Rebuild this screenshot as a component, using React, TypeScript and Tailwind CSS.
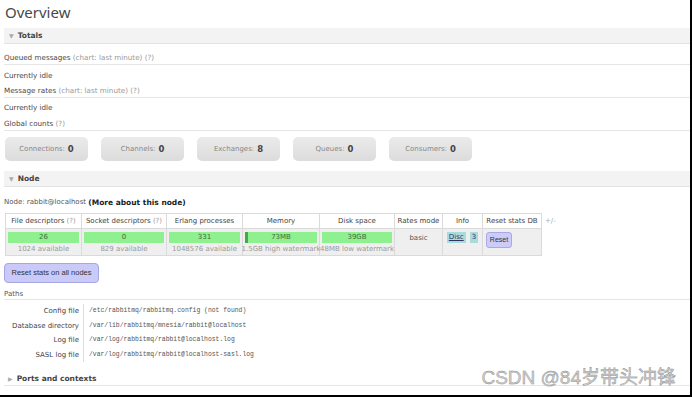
import React from 'react';

const sans = { fontFamily: '"DejaVu Sans", Verdana, sans-serif' };

const Hint = () => <span className="text-[#999]">(?)</span>;

const SectionBar: React.FC<{ open?: boolean; children: React.ReactNode }> = ({ open = true, children }) => (
  <div className="flex items-center h-[16px] bg-[#f3f3f3] border-b border-[#e2e2e2] pl-[5px] gap-[4px]">
    <span className="text-[6px] text-[#aaa]">{open ? '▼' : '▶'}</span>
    <span className="text-[7.5px] font-bold text-[#444]">{children}</span>
  </div>
);

const Line: React.FC<{ children: React.ReactNode; border?: boolean; h: string }> = ({ children, border, h }) => (
  <div
    className={`flex text-[7.2px] leading-[8px] text-[#484848] ${h} ${
      border ? 'items-end pb-[2px] border-b border-[#e6e6e6]' : 'items-center'
    }`}
  >
    {children}
  </div>
);

const CountBox: React.FC<{ label: string; value: string }> = ({ label, value }) => (
  <div className="w-[83px] h-[24px] rounded-[5px] bg-gradient-to-b from-[#ebebeb] to-[#dcdcdc] flex items-center justify-center gap-[3px]">
    <span className="text-[7px] text-[#888]">{label}:</span>
    <span className="text-[8.5px] font-bold text-[#444]">{value}</span>
  </div>
);

const cols = [
  { w: 'w-[75px]', h: 'File descriptors', hint: true },
  { w: 'w-[85px]', h: 'Socket descriptors', hint: true },
  { w: 'w-[76px]', h: 'Erlang processes' },
  { w: 'w-[77px]', h: 'Memory' },
  { w: 'w-[75px]', h: 'Disk space' },
  { w: 'w-[48px]', h: 'Rates mode' },
  { w: 'w-[40px]', h: 'Info' },
  { w: 'w-[59px]', h: 'Reset stats DB' },
];

const Bar: React.FC<{ value: string; sub: string; used?: boolean }> = ({ value, sub, used }) => (
  <div className="flex flex-col items-center px-[2px] pt-[3px]">
    <div className="relative w-full h-[11px] bg-[#8ef08e] flex items-center justify-center">
      {used && <div className="absolute left-0 top-0 h-full w-[3px] bg-[#44aa44]" />}
      <span className="relative text-[7px] text-[#3d6e3d]">{value}</span>
    </div>
    <span className="text-[7px] text-[#999] whitespace-nowrap leading-[12px]">{sub}</span>
  </div>
);

const paths = [
  ['Config file', '/etc/rabbitmq/rabbitmq.config (not found)'],
  ['Database directory', '/var/lib/rabbitmq/mnesia/rabbit@localhost'],
  ['Log file', '/var/log/rabbitmq/rabbit@localhost.log'],
  ['SASL log file', '/var/log/rabbitmq/rabbit@localhost-sasl.log'],
];

export default function App() {
  return (
    <div
      className="relative w-[692px] h-[397px] overflow-hidden bg-white border-r-2 border-b-2 border-black box-border pl-[4px]"
      style={sans}
    >
      <h1 className="h-[28px] pt-[1px] pl-[1px] text-[15px] leading-[22px] text-[#484848]" style={{ fontFamily: '"Noto Sans", sans-serif' }}>
        Overview
      </h1>

      <SectionBar>Totals</SectionBar>

      <div>
        <Line h="h-[21px]" border>
          Queued messages&nbsp;<span className="text-[#999]">(chart: last minute) (?)</span>
        </Line>
        <Line h="h-[21px]">Currently idle</Line>
        <Line h="h-[12px]" border>
          Message rates&nbsp;<span className="text-[#999]">(chart: last minute) (?)</span>
        </Line>
        <Line h="h-[20px]">Currently idle</Line>
        <Line h="h-[13px]" border>
          Global counts&nbsp;<Hint />
        </Line>
      </div>

      <div className="flex gap-[13px] pl-[1px] pt-[6px] pb-[10px]">
        <CountBox label="Connections" value="0" />
        <CountBox label="Channels" value="0" />
        <CountBox label="Exchanges" value="8" />
        <CountBox label="Queues" value="0" />
        <CountBox label="Consumers" value="0" />
      </div>

      <SectionBar>Node</SectionBar>

      <div className="h-[26px] flex items-center text-[7px] text-[#555] pt-[5px]">
        Node: rabbit@localhost&nbsp;<b className="text-[#222] text-[7.5px]">(More about this node)</b>
      </div>

      <div className="flex items-start pl-[1px]">
        <div className="border border-[#dadada] flex flex-col">
          <div className="flex h-[15px] bg-white border-b border-[#dadada]">
            {cols.map((c, i) => (
              <div key={i} className={`${c.w} ${i ? 'border-l border-[#dadada]' : ''} flex items-center justify-center text-[7px] text-[#444] whitespace-nowrap`}>
                {c.h}
                {c.hint && <>&nbsp;<Hint /></>}
              </div>
            ))}
          </div>
          <div className="flex h-[26px] bg-[#efefef]">
            <div className={cols[0].w}><Bar value="26" sub="1024 available" /></div>
            <div className={`${cols[1].w} border-l border-[#dadada]`}><Bar value="0" sub="829 available" /></div>
            <div className={`${cols[2].w} border-l border-[#dadada]`}><Bar value="331" sub="1048576 available" /></div>
            <div className={`${cols[3].w} border-l border-[#dadada] relative z-10`}><Bar value="73MB" sub="1.5GB high watermark" used /></div>
            <div className={`${cols[4].w} border-l border-[#dadada]`}><Bar value="39GB" sub="48MB low watermark" /></div>
            <div className={`${cols[5].w} border-l border-[#dadada] flex justify-center pt-[4px] text-[7px] text-[#555]`}>basic</div>
            <div className={`${cols[6].w} border-l border-[#dadada] flex justify-center gap-[4px] pt-[3px]`}>
              <span className="h-[11px] px-[2px] bg-[#a8dcdc] text-[7px] text-[#336] underline leading-[11px]">Disc</span>
              <span className="h-[11px] px-[2px] bg-[#a8dcdc] text-[7px] text-[#336] leading-[11px]">3</span>
            </div>
            <div className={`${cols[7].w} border-l border-[#dadada] pl-[3px] pt-[3px]`}>
              <div className="w-[26px] h-[16px] rounded-[3px] bg-[#ccccfa] border border-[#a9a9e6] flex items-center justify-center text-[7px] text-[#333]" style={{ fontFamily: '"Liberation Sans", Arial, sans-serif' }}>
                Reset
              </div>
            </div>
          </div>
        </div>
        <span className="ml-[3px] mt-[3px] text-[7px] text-[#aaa]">+/-</span>
      </div>

      <div className="pt-[7px]">
        <div
          className="w-[95px] h-[20px] rounded-[4px] bg-[#cacaf8] border border-[#a7a7e4] flex items-center justify-center text-[7.5px] text-[#333]"
          style={{ fontFamily: '"Liberation Sans", Arial, sans-serif' }}
        >
          Reset stats on all nodes
        </div>
      </div>

      <div className="mt-[6px] h-[11px] flex items-center text-[7px] text-[#555] border-b border-[#e6e6e6]">Paths</div>

      <div className="flex pt-[4px]">
        <div className="w-[80px] flex flex-col items-end pr-[4px] border-r border-[#ddd]">
          {paths.map(([l]) => (
            <div key={l} className="h-[14.5px] flex items-center text-[7px] text-[#444] whitespace-nowrap">{l}</div>
          ))}
        </div>
        <div className="flex flex-col pl-[5px]">
          {paths.map(([l, v]) => (
            <div key={l} className="h-[14.5px] flex items-center text-[6.4px] text-[#555] whitespace-nowrap" style={{ fontFamily: '"Liberation Mono", "DejaVu Sans Mono", monospace' }}>{v}</div>
          ))}
        </div>
      </div>

      <div className="mt-[10px] h-[14px] flex items-center gap-[4px] pl-[4px] border-b border-[#e6e6e6]">
        <span className="text-[6px] text-[#aaa]">▶</span>
        <span className="text-[7.5px] font-bold text-[#444]">Ports and contexts</span>
      </div>

      <div
        className="absolute right-[14px] bottom-[3px] text-[19px] text-[#cfcfcf]"
        style={{ fontFamily: '"Liberation Sans", "Noto Sans CJK SC", sans-serif', WebkitTextStroke: '0.4px #8a8a8a' }}
      >
        CSDN @84岁带头冲锋
      </div>
    </div>
  );
}
